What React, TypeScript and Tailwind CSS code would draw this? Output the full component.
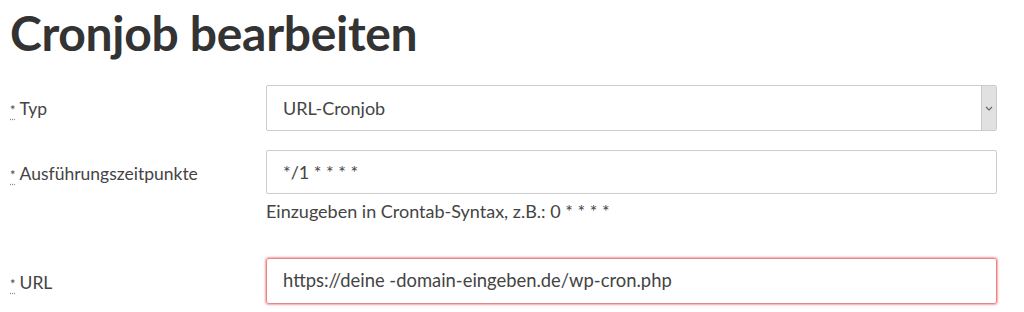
import React from 'react';

const Req = () => (
  <abbr title="Pflichtfeld" className="underline decoration-dotted decoration-[#888] underline-offset-[3px] text-[13px] mr-[4px]">
    *
  </abbr>
);

const Label = ({ text, className = '' }: { text: string; className?: string }) => (
  <div className={`flex items-center h-[45px] pt-[4px] ${className}`}>
    <label className="text-[17.5px] text-[#444]">
      <Req />
      {text}
    </label>
  </div>
);

export default function App() {
  return (
    <div className="bg-white w-[1024px] h-[312px] overflow-hidden pl-[10px] pr-[27px] font-['Lato','Open_Sans',sans-serif] text-[#333]">
      <h1 className="text-[48px] font-bold leading-none pt-[9px] text-[#333] tracking-[-0.3px]">Cronjob bearbeiten</h1>

      <div className="grid grid-cols-[256px_1fr] mt-[28px] gap-y-[19px]">
        <Label text="Typ" />
        <div className="relative h-[46px] border border-[#ccc] rounded-[2px] flex items-center">
          <span className="pl-[16px] text-[18px] text-[#444]">URL-Cronjob</span>
          <div className="absolute right-0 top-0 bottom-0 w-[15px] bg-[#e1e1e1] border-l border-[#c8c8c8] flex items-center justify-center">
            <svg width="8" height="5" viewBox="0 0 8 5" fill="none">
              <path d="M1 1l3 3 3-3" stroke="#666" strokeWidth="1.2" />
            </svg>
          </div>
        </div>

        <Label text="Ausführungszeitpunkte" />
        <div className="flex flex-col">
          <div className="h-[44px] border border-[#ccc] rounded-[2px] flex items-center pl-[16px] text-[18px] text-[#444]">
            */1 * * * *
          </div>
          <p className="text-[18px] text-[#444] mt-[4px] leading-[26px]">Einzugeben in Crontab-Syntax, z.B.: 0 * * * *</p>
        </div>

        <div className="mt-[15px]">
          <Label text="URL" className="pt-[6px]" />
        </div>
        <div className="h-[46px] mt-[15px] border border-[#e58585] rounded-[3px] shadow-[0_0_2px_1px_#f7a5a5] flex items-center pl-[16px] text-[18.4px] text-[#444]">
          https://deine -domain-eingeben.de/wp-cron.php
        </div>
      </div>
    </div>
  );
}
